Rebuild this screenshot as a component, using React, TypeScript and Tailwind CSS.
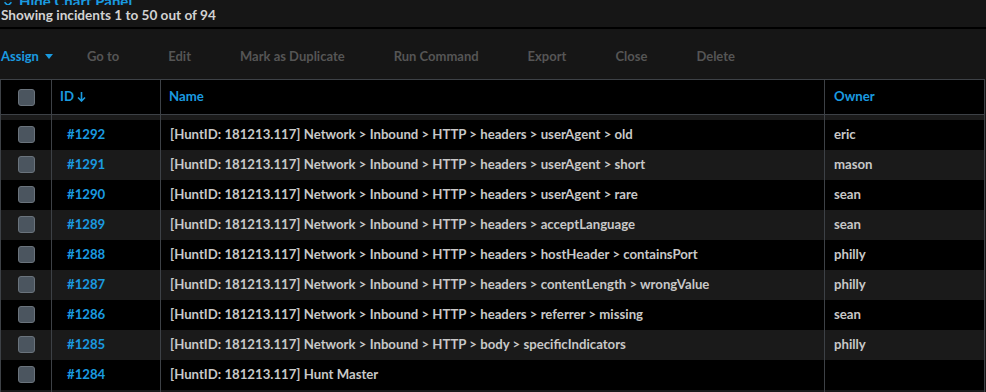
import { ChevronsUpDown } from 'lucide-react';

const rows = [
  { id: 1292, name: 'Network > Inbound > HTTP > headers > userAgent > old', owner: 'eric' },
  { id: 1291, name: 'Network > Inbound > HTTP > headers > userAgent > short', owner: 'mason' },
  { id: 1290, name: 'Network > Inbound > HTTP > headers > userAgent > rare', owner: 'sean' },
  { id: 1289, name: 'Network > Inbound > HTTP > headers > acceptLanguage', owner: 'sean' },
  { id: 1288, name: 'Network > Inbound > HTTP > headers > hostHeader > containsPort', owner: 'philly' },
  { id: 1287, name: 'Network > Inbound > HTTP > headers > contentLength > wrongValue', owner: 'philly' },
  { id: 1286, name: 'Network > Inbound > HTTP > headers > referrer > missing', owner: 'sean' },
  { id: 1285, name: 'Network > Inbound > HTTP > body > specificIndicators', owner: 'philly' },
  { id: 1284, name: 'Hunt Master', owner: '' },
  { id: 1283, name: 'Network > Inbound > HTTP > headers > cookie', owner: 'eric' },
];

const actions = ['Go to', 'Edit', 'Mark as Duplicate', 'Run Command', 'Export', 'Close', 'Delete'];

function Check() {
  return <div className="w-[17px] h-[17px] rounded-[3px] bg-[#4b555f] border border-[#6a737c] mx-auto" />;
}

export default function App() {
  return (
    <div
      className="w-[986px] h-[392px] overflow-hidden bg-[#161616] text-[13.2px] font-bold"
      style={{ fontFamily: '"Lato", "Liberation Sans", sans-serif' }}
    >
      <div className="h-[5px] overflow-hidden">
        <div className="-mt-[10px] flex items-center gap-1 pl-[1px] text-[#1a9be0] text-[15px]">
          <ChevronsUpDown size={14} strokeWidth={3} />
          <span>Hide Chart Panel</span>
        </div>
      </div>
      <div className="h-[21px] flex items-center pl-[1px] text-[#d2d2d2] text-[13.6px]">
        Showing incidents 1 to 50 out of 94
      </div>
      <div className="h-[2px] mt-[1px] bg-black" />

      <div className="h-[50px] pt-[5px] flex items-center text-[#555555] text-[13px]">
        <div className="flex items-center gap-[6px] pl-[1px] text-[#1a9be0] mr-[34px]">
          Assign
          <svg width="8" height="5" viewBox="0 0 8 5">
            <path d="M0 0h8L4 5z" fill="#1a9be0" />
          </svg>
        </div>
        <div className="flex gap-[49px]">
          {actions.map((a) => (
            <span key={a}>{a}</span>
          ))}
        </div>
      </div>

      <table className="w-[985px] border-collapse text-left">
        <thead>
          <tr className="bg-black h-[35px] text-[#1a9be0] border border-[#3d4146]">
            <th className="w-[51px] border-r border-[#3d4146] font-bold">
              <Check />
            </th>
            <th className="w-[109px] pl-[8px] border-r border-[#3d4146] font-bold">
              <span className="inline-flex items-center gap-[3px]">
                ID
                <svg width="9" height="10" viewBox="0 0 9 10">
                  <path d="M4.5 0v8.5M1 5.5l3.5 3.5L8 5.5" fill="none" stroke="#1a9be0" strokeWidth="1.6" />
                </svg>
              </span>
            </th>
            <th className="w-[664px] pl-[8px] border-r border-[#3d4146] font-bold">Name</th>
            <th className="pl-[9px] font-bold">Owner</th>
          </tr>
          <tr className="h-[5px] bg-[#1b1b1b] border-t border-[#3d4146]">
            <td className="border-r border-l border-[#3d4146]" />
            <td className="border-r border-[#3d4146]" />
            <td className="border-r border-[#3d4146]" />
            <td className="border-r border-[#3d4146]" />
          </tr>
        </thead>
        <tbody className="text-[#c8c8c8]">
          {rows.map((r, i) => (
            <tr key={r.id} className={`h-[30px] ${i % 2 ? 'bg-[#1a1a1a]' : 'bg-black'}`}>
              <td className="border-l border-r border-[#3d4146]">
                <Check />
              </td>
              <td className="pl-[15px] text-[#1a9be0] border-r border-[#3d4146]">#{r.id}</td>
              <td className="pl-[9px] border-r border-[#3d4146]">[HuntID: 181213.117] {r.name}</td>
              <td className="pl-[9px] border-r border-[#3d4146]">{r.owner}</td>
            </tr>
          ))}
        </tbody>
      </table>
    </div>
  );
}
